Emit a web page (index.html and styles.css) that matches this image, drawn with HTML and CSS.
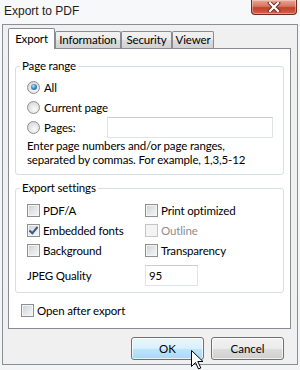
FILE: index.html
```html
<!DOCTYPE html>
<html lang="en">
<head>
  <meta charset="UTF-8">
  <title>Export to PDF</title>
  <link rel="stylesheet" href="styles.css">
</head>
<body>
  <div class="window">
    <div class="titlebar">
      <span class="title">Export to PDF</span>
      <div class="close">
        <svg width="16" height="10" viewBox="0 0 16 10">
          <path d="M4 1 L12 9 M12 1 L4 9" stroke="#6b2a1e" stroke-width="4" stroke-linecap="square"/>
          <path d="M4 1 L12 9 M12 1 L4 9" stroke="#fff" stroke-width="2.2" stroke-linecap="square"/>
        </svg>
      </div>
    </div>

    <div class="client">
      <div class="tabs">
        <div class="tab active">Export</div>
        <div class="tab info">Information</div>
        <div class="tab security">Security</div>
        <div class="tab viewer">Viewer</div>
      </div>

      <div class="panel">
        <fieldset class="group">
          <legend>Page range</legend>
          <div class="row first">
            <span class="radio checked"></span>All
          </div>
          <div class="row">
            <span class="radio"></span>Current page
          </div>
          <div class="row">
            <span class="radio"></span>Pages:
            <span class="textbox pages"></span>
          </div>
          <p class="hint">Enter page numbers and/or page ranges,<br>separated by commas. For example, 1,3,5-12</p>
        </fieldset>

        <fieldset class="group settings">
          <legend>Export settings</legend>
          <div class="checks">
            <div class="row"><span class="check"></span>PDF/A</div>
            <div class="row"><span class="check"></span>Print optimized</div>
            <div class="row"><span class="check checked"></span>Embedded fonts</div>
            <div class="row disabled"><span class="check"></span>Outline</div>
            <div class="row"><span class="check"></span>Background</div>
            <div class="row"><span class="check"></span>Transparency</div>
            <div class="row quality">JPEG Quality</div>
            <div class="row quality"><span class="textbox jpeg">95</span></div>
          </div>
        </fieldset>

        <div class="row open"><span class="check"></span>Open after export</div>
      </div>

      <div class="buttons">
        <button class="btn default">OK</button>
        <button class="btn">Cancel</button>
      </div>
    </div>

    <svg class="cursor" width="13" height="20" viewBox="0 0 13 20">
      <path d="M0.5 0.5 L0.5 16.5 L4.5 12.5 L7.5 19 L9.8 18 L6.8 11.5 L12 11.5 Z" fill="#fff" stroke="#000" stroke-width="1" stroke-linejoin="round"/>
    </svg>
  </div>
</body>
</html>
```

FILE: styles.css
```css
body {
  margin: 0;
  font-family: "Segoe UI", Lato, "Liberation Sans", sans-serif;
  font-size: 11.5px;
  letter-spacing: -0.15px;
  color: #000;
  background: #fafbfc;
}

.window {
  position: relative;
  width: 300px;
  height: 370px;
  background: linear-gradient(180deg, #f7f8f9, #f2f4f6);
  overflow: hidden;
}

.titlebar {
  height: 24px;
  display: flex;
  justify-content: space-between;
  align-items: flex-start;
}

.title {
  margin: 3px 0 0 4px;
  font-family: "Segoe UI", "Liberation Sans", sans-serif;
  font-size: 12px;
  letter-spacing: 0;
  color: #1e1e1e;
  line-height: 16px;
}

.close {
  width: 44px;
  height: 14px;
  margin-right: 3px;
  display: flex;
  align-items: center;
  justify-content: center;
  border: 1px solid #6e2c21;
  border-top: none;
  border-radius: 0 0 4px 4px;
  background: linear-gradient(180deg, #e9a898 0%, #d8745e 45%, #c2412a 55%, #d2644a 100%);
  box-shadow: inset 0 0 0 1px rgba(255, 255, 255, 0.35);
}

.client {
  margin: 0 2px;
  height: 339px;
  border: 1px solid #8b8f94;
  background: #f0f0f0;
}

.tabs {
  display: flex;
  align-items: flex-end;
  height: 19px;
  margin-top: 4px;
  padding-left: 5px;
}

.tab {
  box-sizing: border-box;
  height: 17px;
  line-height: 16px;
  text-align: center;
  border: 1px solid #898c95;
  border-bottom: none;
  background: linear-gradient(180deg, #f2f2f2 0%, #ebebeb 50%, #dddddd 51%, #d2d2d2 100%);
  border-radius: 2px 2px 0 0;
}

.tab.active {
  position: relative;
  z-index: 1;
  width: 47px;
  height: 21px;
  line-height: 20px;
  margin-bottom: -1px;
  background: #fff;
}

.tab.info {
  width: 66px;
}

.tab.security {
  width: 51px;
}

.tab.viewer {
  width: 42px;
}

.panel {
  margin: 0 6px 0 5px;
  height: 270px;
  padding-top: 9px;
  border: 1px solid #898c95;
  background: #fff;
}

.group {
  margin: 0 6px;
  padding: 0 6px 7px 4px;
  border: 1px solid #d5dfe5;
  border-radius: 3px;
}

.group legend {
  padding: 0 2px;
  line-height: 16px;
}

.row {
  display: flex;
  align-items: center;
  height: 20px;
  padding-left: 7px;
}

.row.first {
  margin-top: 3px;
}

.radio {
  width: 11px;
  height: 11px;
  margin-right: 4px;
  border: 1px solid #8e8f8f;
  border-radius: 50%;
  background: radial-gradient(circle at 60% 65%, #fafafa 0%, #e3e3e3 55%, #cfcfcf 100%);
  display: flex;
  align-items: center;
  justify-content: center;
}

.radio.checked::after {
  content: "";
  width: 6px;
  height: 6px;
  border-radius: 50%;
  background: radial-gradient(circle at 40% 35%, #b6e1fb 0%, #3a8fd0 45%, #0b4a84 100%);
}

.check {
  position: relative;
  width: 11px;
  height: 11px;
  margin-right: 3px;
  border: 1px solid #8e8f8f;
  background: linear-gradient(135deg, #cbcfd5 0%, #e8e9eb 60%, #f6f6f6 100%);
  box-shadow: inset 0 0 0 1px #f4f4f4;
}

.check.checked::after {
  content: "";
  position: absolute;
  left: 3px;
  top: 0;
  width: 3px;
  height: 7px;
  border: solid #3d5a86;
  border-width: 0 2px 2px 0;
  transform: rotate(40deg);
}

.row.disabled {
  color: #8d8d8d;
}

.row.disabled .check {
  border-color: #c5c5c5;
  background: #f4f4f4;
  box-shadow: none;
}

.textbox {
  display: block;
  box-sizing: border-box;
  height: 21px;
  line-height: 19px;
  padding-left: 3px;
  border: 1px solid #dfe4ea;
  border-top-color: #c9ccd1;
  background: #fff;
}

.textbox.pages {
  width: 166px;
  margin-left: auto;
  margin-right: 4px;
}

.hint {
  margin: 2px 0 0 7px;
  line-height: 14px;
}

.settings {
  margin-top: 5px;
  padding-bottom: 6px;
}

.checks {
  display: grid;
  grid-template-columns: 125px 1fr;
  margin-top: 4px;
}

.row.quality {
  height: 22px;
  margin-top: 4px;
}

.row.quality .textbox {
  width: 53px;
}

.checks .row:nth-child(even) {
  padding-left: 0;
}

.row.open {
  margin: 7px 0 0 5px;
}

.buttons {
  display: flex;
  justify-content: flex-end;
  gap: 7px;
  margin-top: 8px;
  padding-right: 13px;
}

.btn {
  width: 73px;
  height: 23px;
  font: inherit;
  color: #000;
  border: 1px solid #707070;
  border-radius: 3px;
  background: linear-gradient(180deg, #f2f2f2 0%, #ebebeb 50%, #dddddd 51%, #cfcfcf 100%);
  box-shadow: inset 0 0 0 1px rgba(255, 255, 255, 0.7);
}

.btn.default {
  border-color: #3c7fb1;
  background: linear-gradient(180deg, #eaf6fd 0%, #d9f0fc 50%, #bee6fd 51%, #a7d9f5 100%);
}

.cursor {
  position: absolute;
  left: 191px;
  top: 350px;
}
```
